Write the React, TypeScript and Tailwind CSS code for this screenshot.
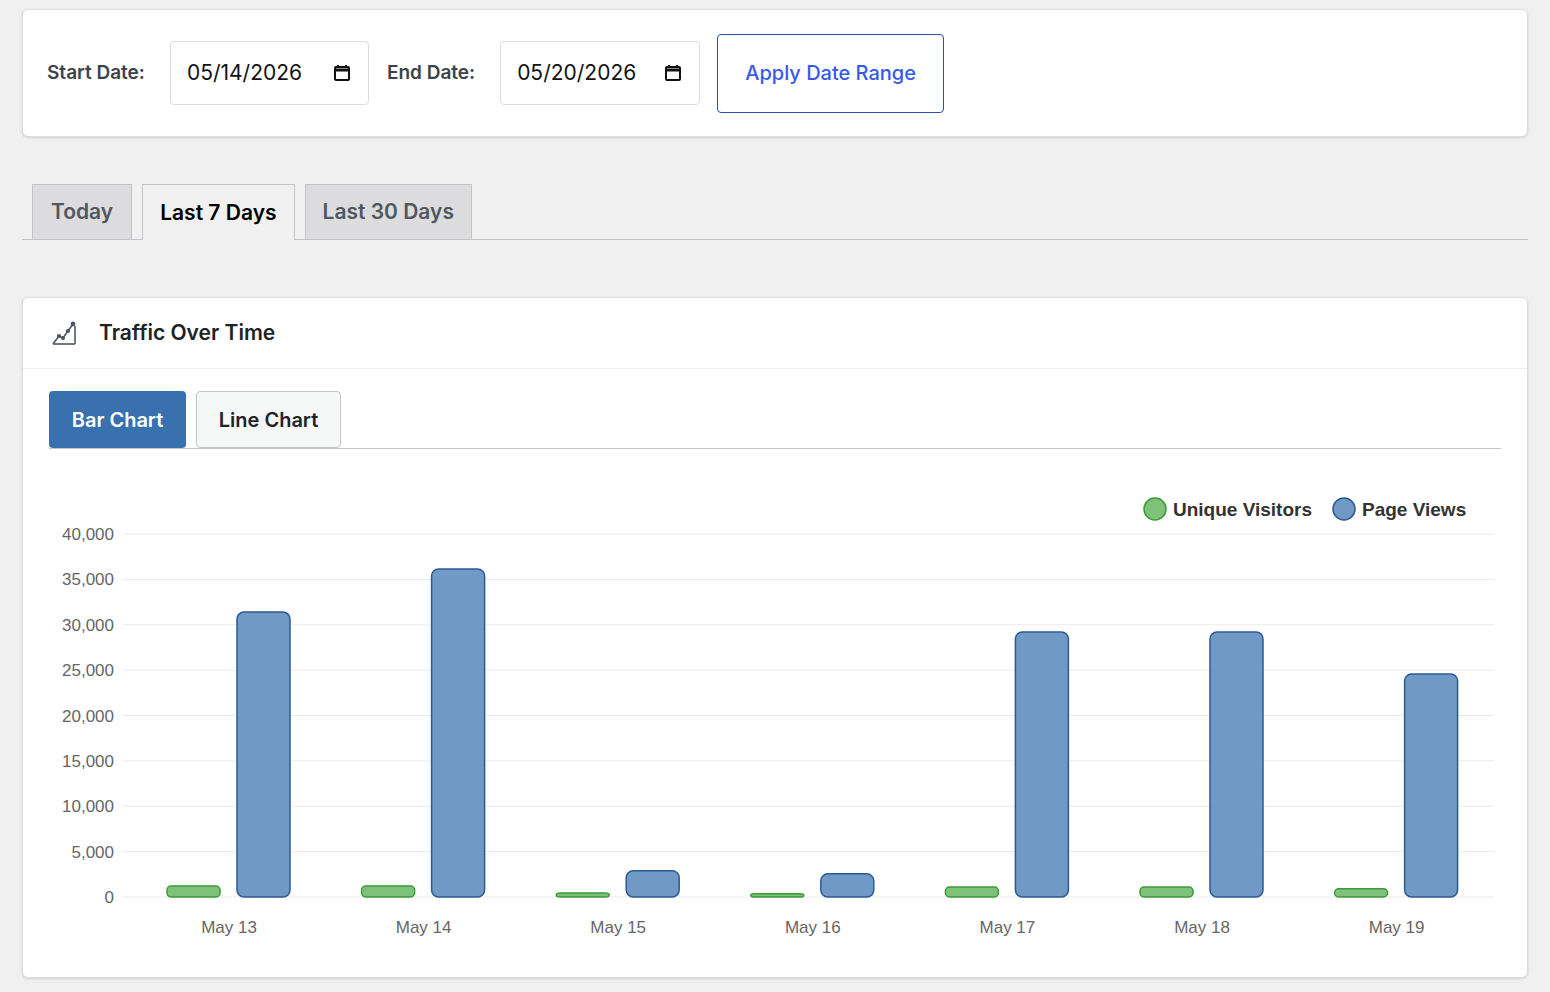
import React from "react";

const cats = ["May 13","May 14","May 15","May 16","May 17","May 18","May 19"];
const uv = [1200,1200,450,350,1100,1100,900];
const pv = [31400,36150,2900,2550,29200,29200,24570];

function Cal() {
  return (
    <svg width="20" height="20" viewBox="0 0 20 20" fill="none" stroke="#111" strokeWidth="2">
      <rect x="3" y="4" width="14" height="13" rx="1" />
      <line x1="3" y1="7" x2="17" y2="7" strokeWidth="3" />
      <line x1="6" y1="2" x2="6" y2="5" /><line x1="14" y1="2" x2="14" y2="5" />
    </svg>
  );
}

export default function App() {
  const ox = 22, oy = 448;
  const yOf = (v: number) => 896 - v * 0.009075 - oy;
  return (
    <div className="min-h-[992px] bg-[#f0f0f1] px-[22px] pt-[9px]" style={{ fontFamily: "Inter, 'Noto Sans', sans-serif" }}>
      <div className="bg-white rounded-md border border-[#dcdcde] h-[128px] flex items-center px-6 gap-0 shadow-sm">
        <span className="text-[19px] font-semibold text-[#3c434a] mr-[25px]">Start Date:</span>
        <div className="w-[199px] h-[64px] border border-[#dcdcde] rounded flex items-center justify-between px-4 text-[21px] text-[#111]">05/14/2026<Cal /></div>
        <span className="text-[19px] font-semibold text-[#3c434a] ml-[18px] mr-[25px]">End Date:</span>
        <div className="w-[200px] h-[64px] border border-[#dcdcde] rounded flex items-center justify-between px-4 text-[21px] text-[#111]">05/20/2026<Cal /></div>
        <button className="ml-[17px] w-[227px] h-[79px] border border-[#2c4fa8] rounded-sm text-[20px] text-[#3858e9] font-medium bg-white">Apply Date Range</button>
      </div>
      <div className="mt-[47px] flex gap-[10px] border-b border-[#c3c4c7] pl-[10px] items-end">
        <div className="h-[55px] px-[18px] flex items-center bg-[#dcdcde] border border-[#c3c4c7] border-b-0 text-[21px] font-semibold text-[#50575e]">Today</div>
        <div className="h-[56px] px-[17px] flex items-center bg-[#f0f0f1] border border-[#c3c4c7] border-b-0 -mb-px text-[21px] font-semibold text-black">Last 7 Days</div>
        <div className="h-[55px] px-[17px] flex items-center bg-[#dcdcde] border border-[#c3c4c7] border-b-0 text-[21px] font-semibold text-[#50575e]">Last 30 Days</div>
      </div>
      <div className="mt-[57px] bg-white rounded-md border border-[#dcdcde] h-[681px] shadow-sm">
        <div className="h-[71px] border-b border-[#f0f0f1] flex items-center px-[28px] gap-[22px]">
          <svg width="26" height="26" viewBox="0 0 26 26" fill="none" stroke="#50575e" strokeWidth="1.6">
            <path d="M2 24 L24 24" /><path d="M24 24 L24 6" />
            <path d="M2 24 L8 16 L12 18 L17 11 L22 4" />
            <circle cx="8" cy="16" r="1.3" fill="#50575e" /><circle cx="12" cy="18" r="1.3" fill="#50575e" /><circle cx="17" cy="11" r="1.3" fill="#50575e" /><circle cx="22" cy="4" r="1.6" fill="#50575e" />
          </svg>
          <span className="text-[21px] font-semibold text-[#1d2327]">Traffic Over Time</span>
        </div>
        <div className="mx-[26px] mt-[22px] flex gap-[10px] border-b border-[#c3c4c7] items-end">
          <button className="h-[57px] w-[137px] rounded bg-[#3871ae] text-white text-[20px] font-semibold">Bar Chart</button>
          <button className="h-[57px] w-[145px] rounded border border-[#c3c4c7] bg-[#f6f7f7] text-[#1d2327] text-[20px] font-semibold">Line Chart</button>
        </div>
        <svg width="1507" height="520" style={{ fontFamily: "'Liberation Sans', Arial, sans-serif" }}>
          {[0,5000,10000,15000,20000,25000,30000,35000,40000].map(v => (
            <g key={v}>
              <line x1={122-ox} x2={1493-ox} y1={yOf(v)} y2={yOf(v)} stroke="#ebebeb" strokeWidth="1" />
              <text x={113-ox} y={yOf(v)+6} textAnchor="end" fontSize="17" fill="#666">{v.toLocaleString("en-US")}</text>
            </g>
          ))}
          {cats.map((c, i) => {
            const cx = 228 + i * 194.6 - ox;
            return (
              <g key={c}>
                <rect x={cx-62} y={yOf(uv[i])} width={53} height={896-oy-yOf(uv[i])} rx="4" fill="#7ec27a" stroke="#3d9a3a" strokeWidth="1.5" />
                <rect x={cx+8} y={yOf(pv[i])} width={53} height={896-oy-yOf(pv[i])} rx="7" fill="#7099c5" stroke="#2c5a95" strokeWidth="1.5" />
                <text x={cx} y={932-oy} textAnchor="middle" fontSize="17" fill="#666">{c}</text>
              </g>
            );
          })}
          <circle cx={1154-ox} cy={508-oy} r="11" fill="#7ec27a" stroke="#3d9a3a" strokeWidth="1.5" />
          <text x={1172-ox} y={515-oy} fontSize="19" fontWeight="bold" fill="#333">Unique Visitors</text>
          <circle cx={1343-ox} cy={508-oy} r="11" fill="#7099c5" stroke="#2c5a95" strokeWidth="1.5" />
          <text x={1361-ox} y={515-oy} fontSize="19" fontWeight="bold" fill="#333">Page Views</text>
        </svg>
      </div>
    </div>
  );
}
